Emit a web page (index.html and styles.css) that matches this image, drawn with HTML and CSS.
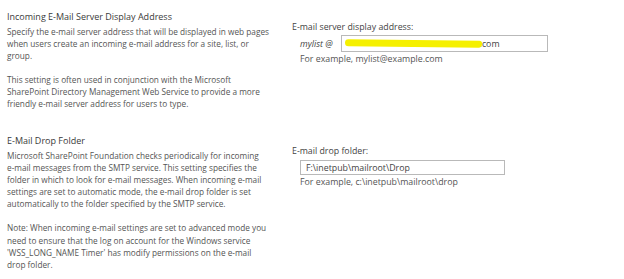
FILE: index.html
```html
<!DOCTYPE html>
<html>
<head>
<meta charset="utf-8">
<link rel="stylesheet" href="styles.css">
</head>
<body>
<div class="page">
  <section class="section first">
    <div class="info">
      <h2 class="heading">Incoming E-Mail Server Display Address</h2>
      <p class="desc">Specify the e-mail server address that will be displayed in web pages<br>when users create an incoming e-mail address for a site, list, or<br>group.</p>
      <p class="desc">This setting is often used in conjunction with the Microsoft<br>SharePoint Directory Management Web Service to provide a more<br>friendly e-mail server address for users to type.</p>
    </div>
    <div class="control">
      <div class="label">E-mail server display address:</div>
      <div class="row">
        <span class="prefix">mylist @</span>
        <div class="input wide"><span class="redact"></span><span class="val tail">.com</span></div>
      </div>
      <div class="hint">For example, mylist@example.com</div>
    </div>
  </section>
  <section class="section second">
    <div class="info">
      <h2 class="heading">E-Mail Drop Folder</h2>
      <p class="desc dense">Microsoft SharePoint Foundation checks periodically for incoming<br>e-mail messages from the SMTP service. This setting specifies the<br>folder in which to look for e-mail messages. When incoming e-mail<br>settings are set to automatic mode, the e-mail drop folder is set<br>automatically to the folder specified by the SMTP service.</p>
      <p class="desc dense">Note: When incoming e-mail settings are set to advanced mode you<br>need to ensure that the log on account for the Windows service<br>'WSS_LONG_NAME Timer' has modify permissions on the e-mail<br>drop folder.</p>
    </div>
    <div class="control">
      <div class="label">E-mail drop folder:</div>
      <div class="row indent">
        <div class="input narrow"><span class="val">F:\inetpub\mailroot\Drop</span></div>
      </div>
      <div class="hint">For example, c:\inetpub\mailroot\drop</div>
    </div>
  </section>
</div>
</body>
</html>
```
FILE: styles.css
```css
* { box-sizing: border-box; }
html, body { margin: 0; padding: 0; background: #fff; }
body {
  font-family: "Open Sans", "Noto Sans", sans-serif;
  color: #555;
  width: 624px;
  height: 279px;
  overflow: hidden;
}
.page { padding: 10px 0 0 7px; }
.section {
  display: grid;
  grid-template-columns: 285px 1fr;
}
.second { margin-top: 12px; }
.desc:last-child { margin-bottom: 0; }
.first .info { padding-bottom: 12px; }
.heading {
  margin: 0 0 2px;
  font-weight: normal;
  font-size: 9px;
  line-height: 14px;
  color: #3a3a3a;
}
.second .heading { margin-bottom: 2px; }
.desc {
  margin: 0 0 12px;
  font-size: 8.25px;
  line-height: 12px;
  white-space: nowrap;
}
.desc.dense { line-height: 12.1px; }
.control { padding-top: 11px; font-size: 8.8px; line-height: 12px; }
.label { color: #444; }
.row {
  display: flex;
  align-items: center;
  gap: 6px;
  margin: 2px 0 1px 8px;
}
.row.indent { margin-top: 3px; }
.prefix { font-style: italic; color: #444; }
.input {
  position: relative;
  height: 17px;
  border: 1px solid #b9b9b9;
  display: flex;
  align-items: center;
  padding-left: 5px;
  color: #444;
}
.wide { width: 207px; margin-left: 2px; }
.narrow { width: 205px; height: 15px; }
.tail { margin-left: 133px; }
.redact {
  position: absolute;
  left: 3px;
  top: 4px;
  width: 137px;
  height: 7px;
  background: #f5f000;
  border-radius: 4px 3px 4px 4px;
  transform: rotate(0.6deg);
}
.hint { margin-left: 8px; color: #555; }
```
